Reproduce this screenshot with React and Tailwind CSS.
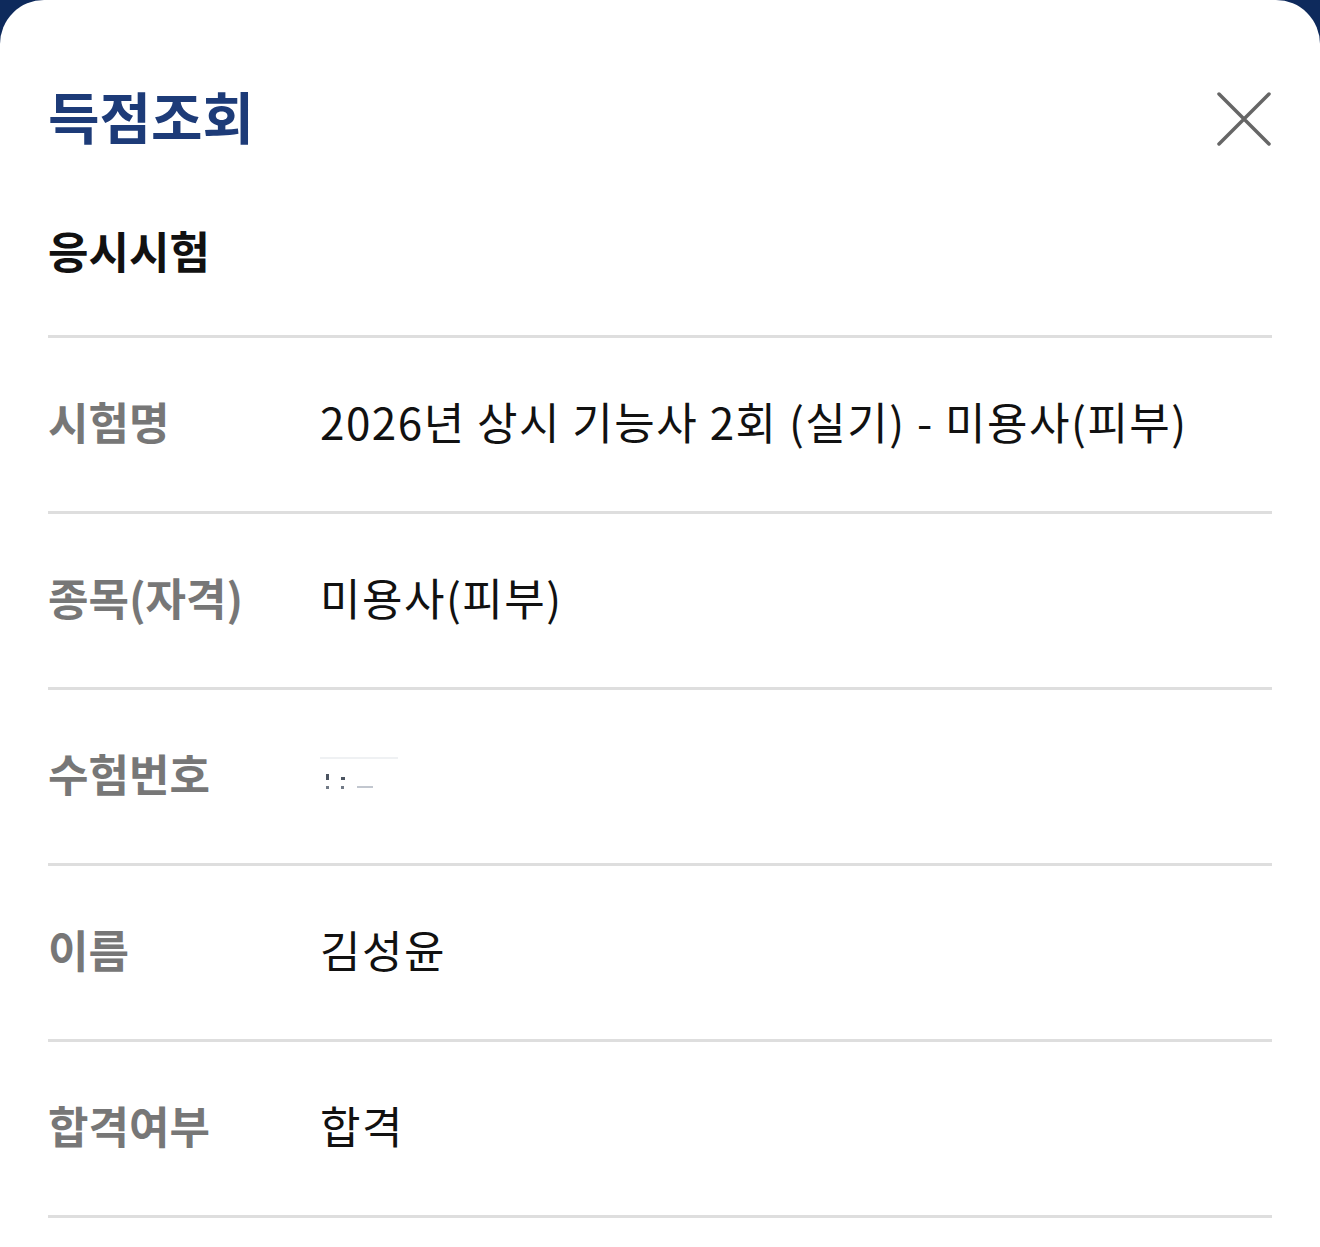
const rows = [
  { label: '시험명', value: '2026년 상시 기능사 2회 (실기) - 미용사(피부)' },
  { label: '종목(자격)', value: '미용사(피부)' },
  { label: '수험번호', value: null },
  { label: '이름', value: '김성윤' },
  { label: '합격여부', value: '합격' },
];

// blurred / masked candidate number
const Redacted = () => (
  <div className="w-[84px] h-[40px] flex flex-col justify-between pt-[4px] pb-[4px]">
    <div className="h-[2px] w-[78px] bg-gray-200/60" />
    <div className="flex items-end gap-[12px] pl-[6px]">
      <div className="flex flex-col gap-[6px]">
        <span className="w-[3px] h-[6px] bg-gray-800/80" />
        <span className="w-[3px] h-[3px] bg-gray-700/70" />
      </div>
      <div className="flex flex-col gap-[6px]">
        <span className="w-[4px] h-[3px] bg-gray-800/80" />
        <span className="w-[3px] h-[3px] bg-gray-700/70" />
      </div>
      <span className="w-[16px] h-[2px] bg-gray-400/60 mb-[1px]" />
    </div>
  </div>
);

export default function App() {
  return (
    <div
      className="w-[1320px] h-[1247px] bg-[#0e2a5c] overflow-hidden"
      style={{ fontFamily: '"Noto Sans CJK KR", "Noto Sans", sans-serif' }}
    >
      <div className="h-full bg-white rounded-t-[44px] px-12 pt-[60px]">
        <div className="h-[112px] flex items-center justify-between">
          <h1 className="text-[56px] font-bold text-[#1d3b78] pb-[2px]">득점조회</h1>
          <button className="w-[56px] h-[56px] flex items-center justify-center mt-[6px]">
            <svg width="54" height="54" viewBox="0 0 54 54" fill="none">
              <path d="M2 2 L52 52 M52 2 L2 52" stroke="#666666" strokeWidth="3.5" strokeLinecap="round" />
            </svg>
          </button>
        </div>
        <div className="h-[163px] flex items-center pb-[8px]">
          <h2 className="text-[44px] font-bold text-[#111111]">응시시험</h2>
        </div>
        <div className="border-t-[3px] border-[#dedede]">
          {rows.map((r) => (
            <div key={r.label} className="flex items-center h-[176px] pb-[8px] border-b-[3px] border-[#dedede]">
              <div className="w-[272px] shrink-0 text-[44px] font-bold text-[#777777]">{r.label}</div>
              <div className="text-[44px] text-[#111111] tracking-[1.5px]">
                {r.value ?? <Redacted />}
              </div>
            </div>
          ))}
        </div>
      </div>
    </div>
  );
}
